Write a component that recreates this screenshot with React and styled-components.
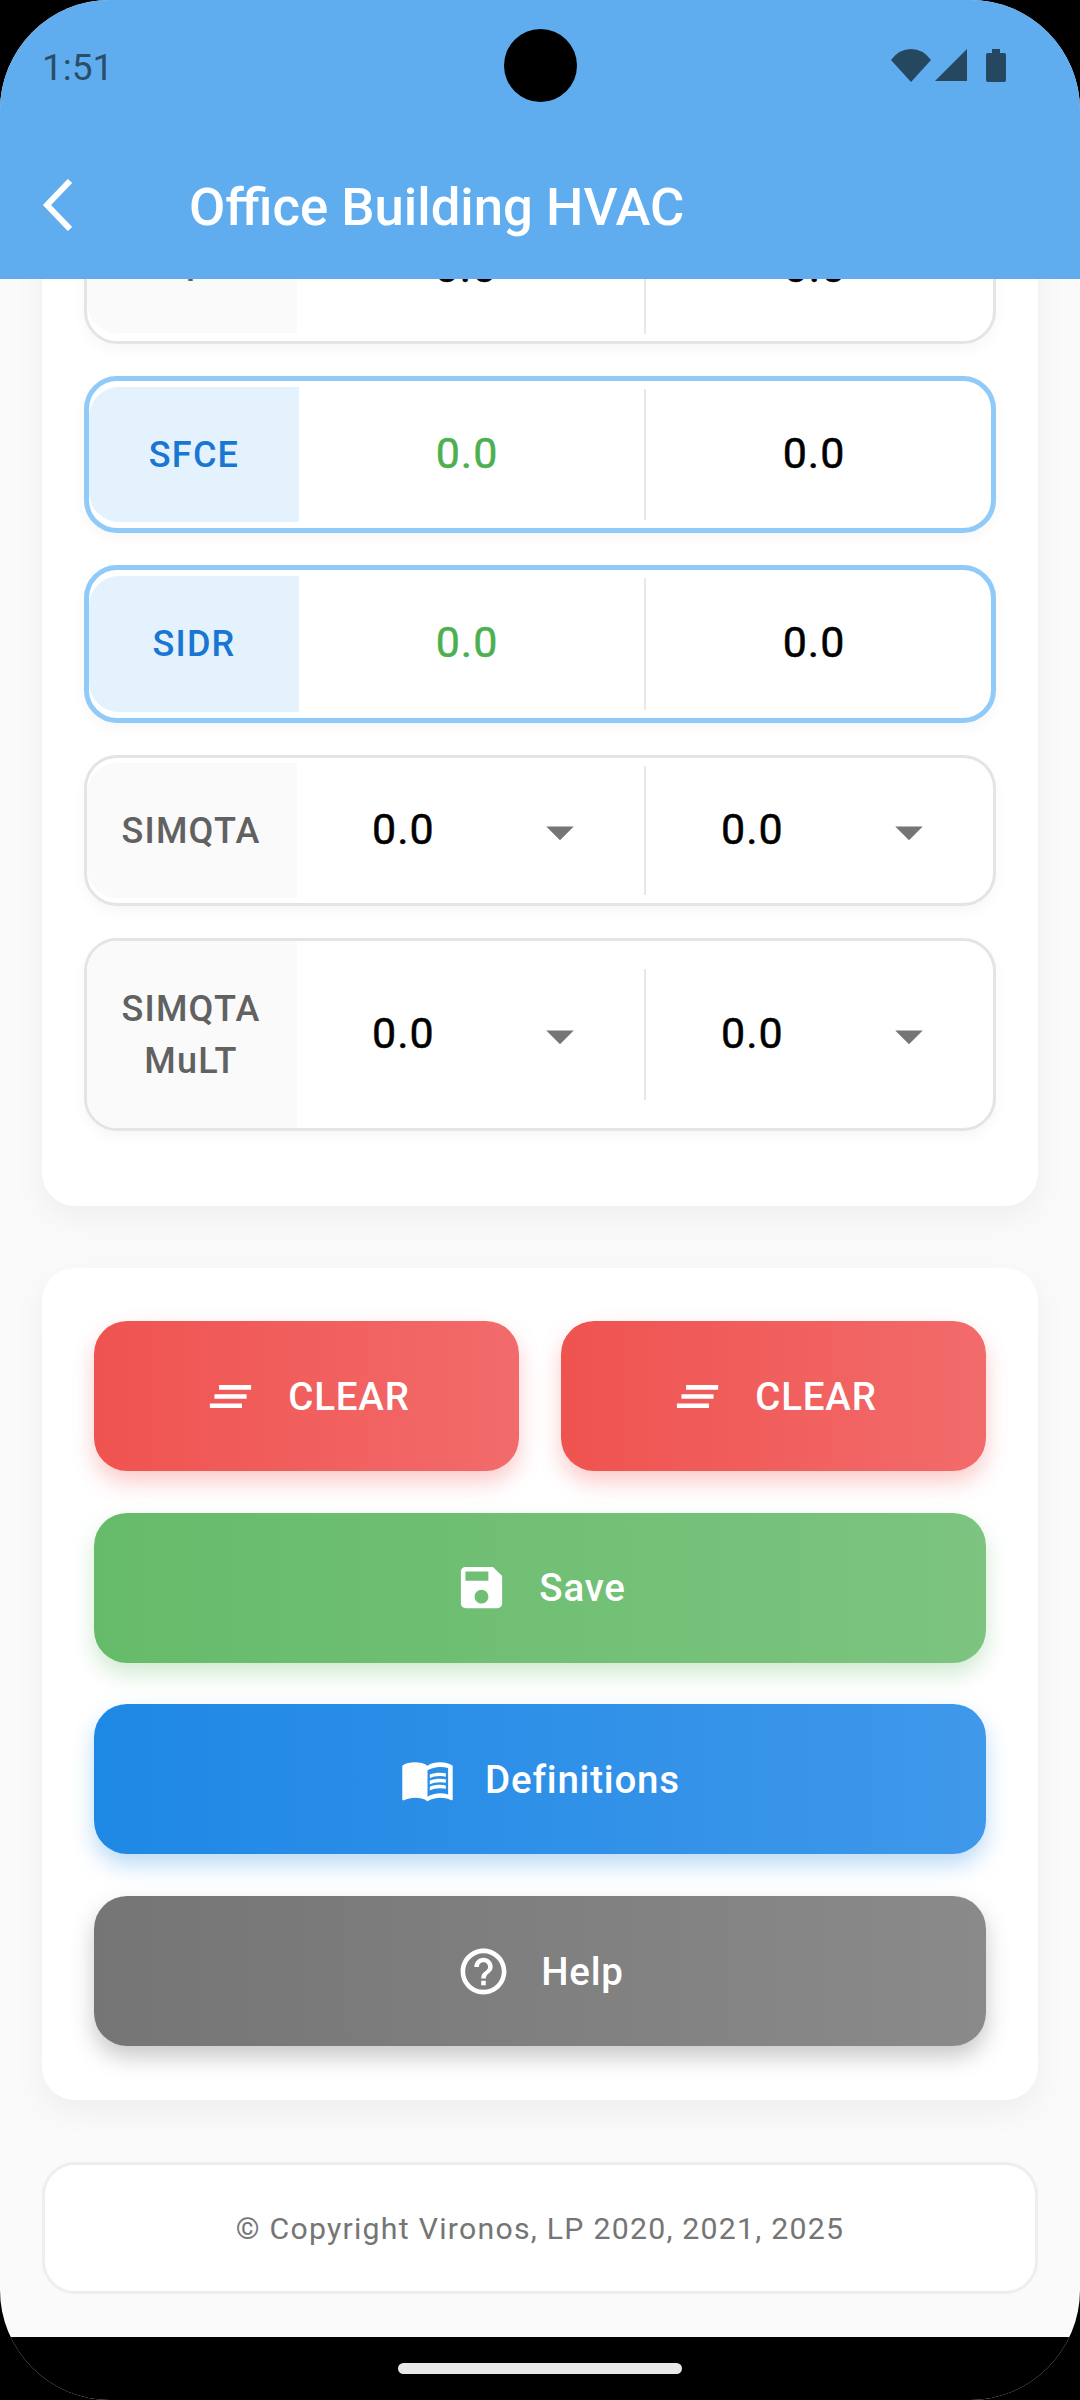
import React from "react";
import styled, {createGlobalStyle} from "styled-components";
import {MdClearAll, MdSave, MdHelpOutline, MdMenuBook, MdArrowDropDown} from "react-icons/md";

const GlobalStyle = createGlobalStyle`
  html, body {
    margin: 0;
    padding: 0;
    background: #000;
  }
  * {
    box-sizing: border-box;
  }
`;

const ROWS = [
    {label: ["T"], active: false, dropdown: false, height: 151, inset: 8, dividerInset: 7, leftValue: "#000"},
    {label: ["SFCE"], active: true, dropdown: false, height: 157, inset: 6, dividerInset: 8, leftValue: "#4CAF50"},
    {label: ["SIDR"], active: true, dropdown: false, height: 158, inset: 6, dividerInset: 8, leftValue: "#4CAF50"},
    {label: ["SIMQTA"], active: false, dropdown: true, height: 151, inset: 5, dividerInset: 8, leftValue: "#000"},
    {label: ["SIMQTA", "MuLT"], active: false, dropdown: true, height: 193, inset: 0, dividerInset: 28, leftValue: "#000"},
];

function ValueCell({dropdown, color}) {
    if (dropdown) {
        return (
            <DropdownCell>
                <Value $color={color}>0.0</Value>
                <MdArrowDropDown size={66} color="#757575"/>
            </DropdownCell>
        );
    }
    return (
        <PlainCell>
            <Value $color={color}>0.0</Value>
        </PlainCell>
    );
}

function StatusIcons() {
    return (
        <StatusGroup>
            <svg width="40" height="33" viewBox="0 0 40 33">
                <path d="M20 33 L0 11 Q8 0 20 0 Q32 0 40 11 Z" fill="#25475F"/>
            </svg>
            <svg width="32" height="33" viewBox="0 0 32 33">
                <path d="M32 0 V32 H0 Z" fill="#25475F"/>
            </svg>
            <BatteryIcon width="20" height="33" viewBox="0 0 20 33">
                <path d="M6 0 H14 V4 H18 Q20 4 20 6 V31 Q20 33 18 33 H2 Q0 33 0 31 V6 Q0 4 2 4 H6 Z" fill="#25475F"/>
            </BatteryIcon>
        </StatusGroup>
    );
}

export default function App() {
    return (
        <>
            <GlobalStyle/>
            <Screen>
                <Header>
                    <StatusBar>
                        <Clock>1:51</Clock>
                        <StatusIcons/>
                    </StatusBar>
                    <Camera/>
                    <AppBar>
                        <svg width="31" height="52" viewBox="0 0 31 52">
                            <path d="M28 2 L5 26 L28 50" fill="none" stroke="#fff" strokeWidth="6"/>
                        </svg>
                        <Title>Office Building HVAC</Title>
                    </AppBar>
                </Header>
                <ScrollArea>
                    <FieldsCard>
                        {ROWS.map((row, idx) => (
                            <Row key={idx} $active={row.active} $height={row.height}>
                                <Label $active={row.active} $inset={row.inset}>
                                    {row.label.map(line => <span key={line}>{line}</span>)}
                                </Label>
                                <ValueCell dropdown={row.dropdown} color={row.leftValue}/>
                                <Divider $inset={row.dividerInset}/>
                                <ValueCell dropdown={row.dropdown} color="#000"/>
                            </Row>
                        ))}
                    </FieldsCard>
                    <ActionsCard>
                        <ButtonRow>
                            <ActionButton $from="#EF5350" $to="#F26B6B" $glow="rgba(239,83,80,.3)">
                                <MdClearAll size={55}/>
                                <span>CLEAR</span>
                            </ActionButton>
                            <ActionButton $from="#EF5350" $to="#F26B6B" $glow="rgba(239,83,80,.3)">
                                <MdClearAll size={55}/>
                                <span>CLEAR</span>
                            </ActionButton>
                        </ButtonRow>
                        <ActionButton $from="#66BB6A" $to="#7CC480" $glow="rgba(102,187,106,.3)">
                            <MdSave size={55}/>
                            <span>Save</span>
                        </ActionButton>
                        <ActionButton $from="#1E88E5" $to="#3F98EA" $glow="rgba(30,136,229,.3)">
                            <MdMenuBook size={55}/>
                            <span>Definitions</span>
                        </ActionButton>
                        <ActionButton $from="#757575" $to="#8A8A8A" $glow="rgba(97,97,97,.35)">
                            <MdHelpOutline size={55}/>
                            <span>Help</span>
                        </ActionButton>
                    </ActionsCard>
                    <FooterCard>© Copyright Vironos, LP 2020, 2021, 2025</FooterCard>
                </ScrollArea>
                <NavBar>
                    <HomePill/>
                </NavBar>
            </Screen>
        </>
    );
}

const Screen = styled.div`
  width: 1080px;
  height: 2400px;
  position: relative;
  display: flex;
  flex-direction: column;
  overflow: hidden;
  background: #FAFAFA;
  border-radius: 110px;
  font-family: Roboto, "Liberation Sans", sans-serif;
`;

const Header = styled.header`
  height: 279px;
  flex: none;
  background: #5FADEF;
  padding: 0 42px;
  display: flex;
  flex-direction: column;
  position: relative;
  z-index: 2;
`;

const StatusBar = styled.div`
  height: 134px;
  padding-top: 46px;
  display: flex;
  justify-content: space-between;
  align-items: flex-start;
`;

const Clock = styled.span`
  font-size: 37px;
  line-height: 44px;
  color: #2A4D69;
`;

const StatusGroup = styled.div`
  display: flex;
  align-items: flex-start;
  gap: 4px;
  margin: 3px 32px 0 0;
`;

const BatteryIcon = styled.svg`
  margin-left: 15px;
`;

const Camera = styled.div`
  position: absolute;
  left: 504px;
  top: 29px;
  width: 73px;
  height: 73px;
  border-radius: 50%;
  background: #000;
`;

const AppBar = styled.div`
  display: flex;
  align-items: center;
  gap: 116px;
  height: 146px;
  margin-top: -2px;
`;

const Title = styled.h1`
  margin: 3px 0 0;
  font-size: 52.7px;
  font-weight: 500;
  color: #fff;
  white-space: nowrap;
`;

const ScrollArea = styled.main`
  flex: 1;
  min-height: 0;
  overflow: hidden;
  display: flex;
  flex-direction: column;
  justify-content: flex-end;
  gap: 62px;
  padding: 0 42px 43px;
`;

const FieldsCard = styled.section`
  flex: none;
  background: #fff;
  border-radius: 33px;
  padding: 33px 42px 75px;
  display: flex;
  flex-direction: column;
  gap: 32px;
  box-shadow: 0 11px 33px rgba(0, 0, 0, .05);
`;

const Row = styled.div`
  height: ${props => props.$height}px;
  flex: none;
  display: flex;
  align-items: stretch;
  background: #fff;
  border: ${props => props.$active ? "5px solid #90CAF9" : "3px solid #E4E4E4"};
  border-radius: 33px;
  box-shadow: 0 6px 14px rgba(0, 0, 0, .035);
`;

const Label = styled.div`
  width: 210px;
  flex: none;
  margin: ${props => props.$inset}px 0;
  padding-right: ${props => props.$active ? 0 : 2}px;
  display: flex;
  flex-direction: column;
  align-items: center;
  justify-content: center;
  background: ${props => props.$active ? "#E3F2FD" : "#FAFAFA"};
  border-radius: 30px 0 0 30px;
  color: ${props => props.$active ? "#1976D2" : "#616161"};
  font-size: 36px;
  font-weight: 500;
  letter-spacing: 1.2px;
  line-height: 52px;
`;

const PlainCell = styled.div`
  flex: 1;
  display: flex;
  align-items: center;
  justify-content: center;
  padding-right: 9px;
`;

const DropdownCell = styled.div`
  flex: 1;
  display: flex;
  align-items: center;
  justify-content: space-between;
  padding: 0 51px 0 75px;

  svg {
    flex: none;
    margin-top: 2px;
  }
`;

const Value = styled.span`
  font-size: 43px;
  font-weight: 400;
  -webkit-text-stroke: 0.5px ${props => props.$color};
  letter-spacing: 1px;
  line-height: 52px;
  color: ${props => props.$color};
  margin-top: -4px;
`;

const Divider = styled.div`
  width: 2px;
  flex: none;
  margin: ${props => props.$inset}px 0;
  background: #E8E8E8;
`;

const ActionsCard = styled.section`
  flex: none;
  background: #fff;
  border-radius: 33px;
  padding: 53px 52px 54px;
  display: flex;
  flex-direction: column;
  gap: 41.6px;
  box-shadow: 0 11px 33px rgba(0, 0, 0, .05);
`;

const ButtonRow = styled.div`
  display: grid;
  grid-template-columns: 1fr 1fr;
  gap: 42px;
`;

const ActionButton = styled.button`
  height: 150px;
  flex: none;
  border: none;
  border-radius: 33px;
  padding: 0;
  display: flex;
  align-items: center;
  justify-content: center;
  gap: 30px;
  color: #fff;
  font-family: inherit;
  font-size: 38.5px;
  font-weight: 500;
  letter-spacing: 0.8px;
  background: linear-gradient(90deg, ${props => props.$from}, ${props => props.$to});
  box-shadow: 0 11px 22px ${props => props.$glow};
`;

const FooterCard = styled.footer`
  flex: none;
  height: 132px;
  background: #fff;
  border: 3px solid #EEEEEE;
  border-radius: 33px;
  display: flex;
  align-items: center;
  justify-content: center;
  color: #757575;
  font-size: 30.25px;
  letter-spacing: 1.25px;
`;

const NavBar = styled.div`
  height: 63px;
  flex: none;
  background: #000;
  display: flex;
  justify-content: center;
  padding-top: 26px;
`;

const HomePill = styled.div`
  width: 284px;
  height: 11px;
  border-radius: 6px;
  background: #E8E8E8;
`;
